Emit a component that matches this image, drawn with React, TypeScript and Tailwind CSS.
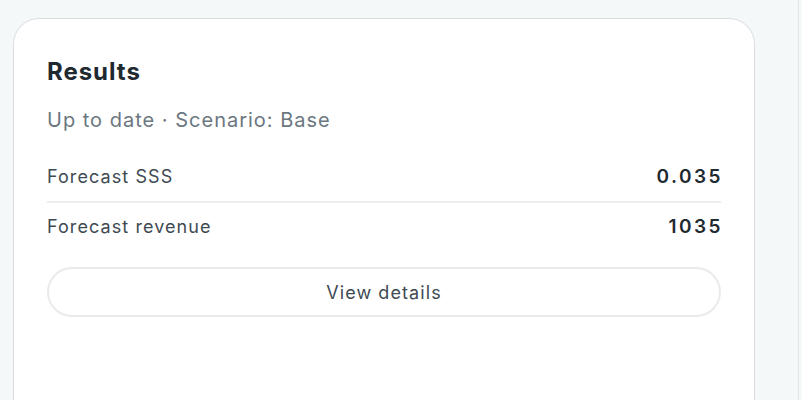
export default function App() {
  const rows = [
    { label: 'Forecast SSS', value: '0.035' },
    { label: 'Forecast revenue', value: '1035' },
  ];

  return (
    <div
      className="w-[802px] h-[400px] overflow-hidden bg-[#f5f8f9] flex"
      style={{ fontFamily: 'Inter, "Noto Sans", sans-serif' }}
    >
      <div className="w-[799px] border-r border-[#dfe5e8] pl-[13px] pt-[18px]">
        <div className="w-[742px] h-[420px] bg-white border-[1.5px] border-[#dadde0] rounded-[26px] px-[33px] pt-[39px]">
          <h2 className="text-[24px] leading-[28px] font-bold text-[#1f2a30] tracking-[0.04em]">Results</h2>
          <p className="mt-[21px] text-[20px] leading-[26px] text-[#6b7780] tracking-[0.05em]">
            Up to date · Scenario: Base
          </p>
          <div className="mt-[20px] flex flex-col">
            {rows.map((r, i) => (
              <div
                key={r.label}
                className={
                  'flex items-center justify-between py-[12px] ' +
                  (i === 0 ? 'border-b-2 border-[#eceef0]' : '')
                }
              >
                <span className="text-[18px] leading-[24px] text-[#3e4a52] tracking-[0.06em]">
                  {r.label}
                </span>
                <span className="text-[19px] leading-[24px] font-semibold text-[#1f2a30] tracking-[0.13em] -mr-[2px]">
                  {r.value}
                </span>
              </div>
            ))}
          </div>
          <button className="mt-[16px] w-full h-[50px] rounded-full border-2 border-[#e8eaec] bg-white text-[18px] text-[#3e4a52] tracking-[0.06em]">
            View details
          </button>
        </div>
      </div>
    </div>
  );
}
